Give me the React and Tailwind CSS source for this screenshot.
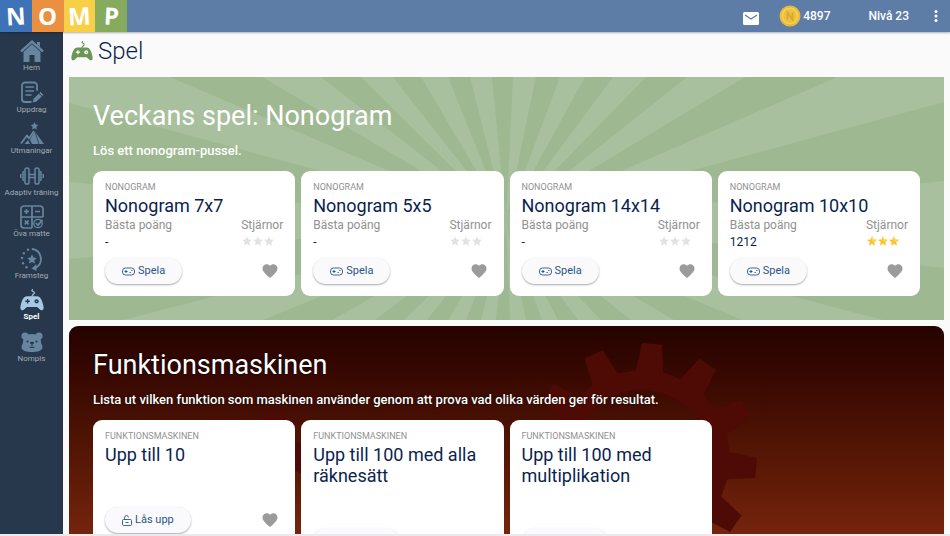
import React from 'react';

const logo = [
  { letter: 'N', color: 'bg-[#3f73b7]', tilt: '-rotate-3' },
  { letter: 'O', color: 'bg-[#ea9040]', tilt: 'rotate-0' },
  { letter: 'M', color: 'bg-[#f8d048]', tilt: '-rotate-3' },
  { letter: 'P', color: 'bg-[#86aa5e]', tilt: 'rotate-3' },
];

const HomeIcon = () => (
  <svg className="w-6 h-6" viewBox="0 0 24 24" fill="currentColor">
    <path d="M12 4 3.500 12v11H9.500v-7h5v7h6V12z" />
    <path d="M1 12.500 12 2.500l11 10" fill="none" stroke="#27384c" strokeWidth="4" />
    <path d="M1 12.500 12 2.500l11 10" fill="none" stroke="currentColor" strokeWidth="2.400" />
    <path d="M17 3h3v5l-3-2.500z" />
  </svg>
);

const TaskIcon = () => (
  <svg className="w-6 h-6" viewBox="0 0 24 24" fill="none" stroke="currentColor" strokeWidth="1.800" strokeLinecap="round" strokeLinejoin="round">
    <path d="M17 9V4.500a3 3 0 0 0-3-3H5a3 3 0 0 0-3 3V18a3 3 0 0 0 3 3h6" />
    <path d="M6 6h7.500M6 10h7.500M6 14h5" strokeWidth="1.500" />
    <path d="m12 22 1.200-4.500 7.300-7 3.500 3.300-7.500 7.200z" fill="currentColor" stroke="#27384c" strokeWidth="1" />
    <path d="m18.500 12 4 3.800" stroke="#27384c" strokeWidth="1" />
  </svg>
);

const MountainIcon = () => (
  <svg className="w-6 h-6" viewBox="0 0 24 24" fill="currentColor">
    <path d="m14.500 0 1.200 2.500 2.600.4-1.900 1.900.4 2.700-2.300-1.200-2.300 1.200.4-2.700-1.900-1.900 2.600-.4z" />
    <path d="M14.500 9 24 22H12l-2-4z" />
    <path d="m14.500 9 2.500 7 2 6" fill="none" stroke="#27384c" strokeWidth=".8" />
    <path d="m1 21.500 6-8 2 3L14 9" fill="none" stroke="currentColor" strokeWidth="1.800" strokeLinejoin="round" />
    <path d="m4.500 22 3.500-4 2 4z" />
  </svg>
);

const DumbbellIcon = () => (
  <svg className="w-6 h-6" viewBox="0 0 24 24" fill="none" stroke="currentColor" strokeWidth="1.500">
    <path d="M4.500 16.500H4a1 1 0 0 1-1-1v-7a1 1 0 0 1 1-1h.5M19.500 16.500h.5a1 1 0 0 0 1-1v-7a1 1 0 0 0-1-1h-.5" />
    <rect x="5" y="4" width="4" height="16" rx="1.800" />
    <rect x="15" y="4" width="4" height="16" rx="1.800" />
    <path d="M9 10.500h6M9 13.500h6M.8 10v4M23.200 10v4" />
  </svg>
);

const MathIcon = () => (
  <svg className="w-6 h-6" viewBox="0 0 24 24" fill="none" stroke="currentColor" strokeWidth="1.700">
    <path d="M23 12V4a3 3 0 0 0-3-3H4a3 3 0 0 0-3 3v16a3 3 0 0 0 3 3h8M12 1v22M1 12h22" />
    <path d="M6.500 4v5M4 6.500h5M15 6.500h5M4.800 15.500l3.800 3.800M8.600 15.500l-3.800 3.800" />
    <circle cx="18" cy="18.500" r="4.200" strokeWidth="1.300" />
    <path d="m16 18 2 2.200 4.500-5.500" />
  </svg>
);

const ProgressIcon = () => (
  <svg className="w-6 h-6" viewBox="0 0 24 24" fill="currentColor">
    <path d="M12.500 2A10.200 10.200 0 0 1 15.500 21" fill="none" stroke="currentColor" strokeWidth="1.800" strokeLinecap="round" />
    <path d="m11.500 21.500 5-4.500v7z" />
    <path d="m12 7.500 1.500 3 3.300.5-2.400 2.300.6 3.200-3-1.500-3 1.500.6-3.200L7.200 11l3.300-.5z" />
    <circle cx="8" cy="2.800" r="1.200" />
    <circle cx="3.800" cy="6.200" r="1.200" />
    <circle cx="2" cy="11" r="1.200" />
    <circle cx="3" cy="16.200" r="1.200" />
    <circle cx="6.500" cy="20.300" r="1.200" />
  </svg>
);

const GameIcon = ({ className, holes }) => (
  <svg className={className} viewBox="0 0 26 24" fill="currentColor">
    <path d="M13 8C13.500 5.500 16 6 15.500 4S11.500 3 13.500.8" fill="none" stroke="currentColor" strokeWidth="1.300" strokeLinecap="round" />
    <path d="M7.500 8h11C22 8 24 12 25.500 19c.6 3.500-1.500 5-3.500 3.500L18.500 19.500h-11L4 22.500C2 24 0 22.500.5 19 2 12 4 8 7.500 8z" />
    <path d="M8.200 11v4.800M5.800 13.400h4.800" stroke={holes} strokeWidth="1.500" />
    <circle cx="18" cy="13.400" r="2.300" fill={holes} />
    <circle cx="18" cy="13.400" r=".7" />
  </svg>
);

const BearIcon = () => (
  <svg className="w-6 h-6" viewBox="0 0 24 24" fill="currentColor">
    <circle cx="5" cy="6" r="3.600" />
    <circle cx="19" cy="6" r="3.600" />
    <path d="M12 4c6 0 9 3.500 9 8 0 2 1.500 3 1.500 5 0 4-5 5-10.500 5S1.500 21 1.500 17c0-2 1.500-3 1.500-5 0-4.500 3-8 9-8z" />
    <g fill="#27384c">
      <circle cx="7.500" cy="11.500" r="1.100" />
      <circle cx="16.500" cy="11.500" r="1.100" />
      <ellipse cx="12" cy="13" rx="2" ry="1.300" />
    </g>
    <path d="M12 14v2.500M9.500 17q2.500 1.500 5 0" fill="none" stroke="#27384c" />
  </svg>
);

const menu = [
  { label: 'Hem', icon: <HomeIcon /> },
  { label: 'Uppdrag', icon: <TaskIcon /> },
  { label: 'Utmaningar', icon: <MountainIcon /> },
  { label: 'Adaptiv träning', icon: <DumbbellIcon /> },
  { label: 'Öva matte', icon: <MathIcon /> },
  { label: 'Framsteg', icon: <ProgressIcon /> },
  { label: 'Spel', icon: <GameIcon className="w-6 h-6" holes="#27384c" />, active: true },
  { label: 'Nompis', icon: <BearIcon /> },
];

const weekly = [
  { title: 'Nonogram 7x7', score: '-', stars: 0 },
  { title: 'Nonogram 5x5', score: '-', stars: 0 },
  { title: 'Nonogram 14x14', score: '-', stars: 0 },
  { title: 'Nonogram 10x10', score: '1212', stars: 3 },
];

const machine = ['Upp till 10', 'Upp till 100 med alla räknesätt', 'Upp till 100 med multiplikation'];

// light rays, each one a wedge out from the middle of the banner
const rays = [
  '0,0 101,0 437,144 0,26',
  '193,0 252,0 437,144',
  '292,0 324,0 437,144',
  '352,0 379,0 437,144',
  '401,0 423,0 437,144',
  '444,0 467,0 437,144',
  '491,0 516,0 437,144',
  '544,0 577,0 437,144',
  '618,0 676,0 437,144',
  '768,0 875,0 875,25 437,144',
  '875,104 875,191 437,144',
  '814,243 673,243 437,144',
  '605,243 562,243 437,144',
  '532,243 509,243 437,144',
  '489,243 473,243 437,144',
  '457,243 441,243 437,144',
  '427,243 412,243 437,144',
  '397,243 379,243 437,144',
  '358,243 335,243 437,144',
  '306,243 263,243 437,144',
  '194,243 54,243 437,144',
  '0,182 0,105 437,144',
];

// 12 teeth, and a round hole in the middle
const gearPath = (cx, cy, outer, base, hole) => {
  const points = [];
  for (let i = 0; i < 12; i++) {
    const mid = i * 30 + 5;
    [[-9, base], [-5, outer], [5, outer], [9, base]].forEach(([turn, r]) => {
      const a = ((mid + turn) * Math.PI) / 180;
      points.push(`${(cx + r * Math.cos(a)).toFixed(1)} ${(cy + r * Math.sin(a)).toFixed(1)}`);
    });
  }
  return `M${points.join('L')}ZM${cx - hole} ${cy}a${hole} ${hole} 0 1 0 ${hole * 2} 0a${hole} ${hole} 0 1 0 ${-hole * 2} 0Z`;
};

const Star = ({ filled }) => (
  <svg className="w-[10px] h-[10px]" viewBox="0 0 24 24">
    <path d="m12 .5 3.300 8 8.500.6-6.500 5.600 2 8.500L12 18.500l-7.300 4.700 2-8.500L.2 9.100l8.500-.6z" fill={filled ? '#fbc02c' : '#e2e2e2'} />
    {filled && <path d="m12 .5 3.300 8 8.500.6L12 14z" fill="#ffdc50" />}
  </svg>
);

const Heart = () => (
  <button className="mr-1 text-[#9b9b9b]" aria-label="Favorit">
    <svg className="w-[18px] h-[18px]" viewBox="0 0 24 24" fill="currentColor">
      <path d="m12 21.350-1.450-1.320C5.400 15.360 2 12.280 2 8.500 2 5.420 4.420 3 7.500 3c1.740 0 3.410.81 4.500 2.090C13.090 3.810 14.760 3 16.500 3 19.580 3 22 5.420 22 8.500c0 3.780-3.400 6.860-8.550 11.540z" />
    </svg>
  </button>
);

const PadIcon = () => (
  <svg className="w-[13px] h-[9px]" viewBox="0 0 26 18" fill="none" stroke="currentColor" strokeWidth="1.800">
    <rect x="1" y="2" width="24" height="14" rx="6" />
    <path d="M8 6v6M5 9h6" strokeWidth="2" />
    <path d="M15 11h2.500M18.500 7H21" strokeWidth="2" />
  </svg>
);

const LockIcon = () => (
  <svg className="w-[10px] h-[11px]" viewBox="0 0 20 22" fill="none" stroke="currentColor" strokeWidth="1.800">
    <rect x="1" y="9" width="18" height="12" rx="2" />
    <path d="M5 9V5.500a4 4 0 0 1 8-.5M7 15h6" />
  </svg>
);

const Card = ({ category, title, action, icon, children }) => (
  <div className="bg-white rounded-[9px] px-3 pt-[10px] pb-3">
    <div className="text-[9px] leading-3 text-[#919191] uppercase">{category}</div>
    <h3 className="text-lg leading-[21px] mt-[2px] text-[#0b1f4f]">{title}</h3>
    <div className="h-8 mt-px">{children}</div>
    <div className="flex items-center justify-between mt-[9px]">
      <button className="flex items-center gap-[3px] h-[26px] px-[17px] rounded-full bg-[#fafafd] text-[#285588] text-[11px] shadow-[0_1px_2px_rgba(0,0,0,0.35)]">
        {icon}
        <span>{action}</span>
      </button>
      <Heart />
    </div>
  </div>
);

const App = () => {
  return (
    <div className="h-screen flex flex-col overflow-hidden bg-[#fafafa] font-[Roboto,sans-serif] border-b-2 border-[#e9e9ee]">
      <header className="h-8 shrink-0 flex items-center justify-between bg-[#5e7da6] text-white shadow-[0_1px_2px_rgba(0,0,0,0.3)] z-10">
        <a href="#" className="h-8 w-[127px] grid grid-cols-4" aria-label="NOMP">
          {logo.map(({ letter, color, tilt }) => (
            <span key={letter} className={`${color} flex items-center justify-center`}>
              <span className={`${tilt} text-2xl leading-none font-bold font-['Open_Sans',sans-serif]`}>{letter}</span>
            </span>
          ))}
        </a>
        <div className="flex items-center text-xs">
          <button aria-label="Meddelanden" className="mt-1 mr-5">
            <svg className="w-4 h-[13px]" viewBox="0 0 16 13">
              <rect width="16" height="13" rx="1.500" fill="#fff" />
              <path d="m2 3 6 4 6-4" fill="none" stroke="#5e7da6" strokeWidth="1.300" />
            </svg>
          </button>
          <svg className="w-[22px] h-[22px] mr-[2px]" viewBox="0 0 22 22">
            <circle cx="11" cy="11" r="10.500" fill="#e9b93a" />
            <circle cx="11" cy="11" r="8.500" fill="#f5d35a" />
            <circle cx="11" cy="11" r="7" fill="#edc140" />
            <path d="M8.500 14.500v-7l5 7v-7" fill="none" stroke="#d9a92c" strokeWidth="1.700" />
          </svg>
          <span className="font-medium">4897</span>
          <span className="ml-[38px] font-medium">Nivå 23</span>
          <button aria-label="Meny" className="ml-[25px] mr-3">
            <svg className="w-1 h-3" viewBox="0 0 4 12" fill="#fff">
              <circle cx="2" cy="1.500" r="1.500" />
              <circle cx="2" cy="6" r="1.500" />
              <circle cx="2" cy="10.500" r="1.500" />
            </svg>
          </button>
        </div>
      </header>

      <div className="flex flex-1 min-h-0">
        <nav className="w-[63px] shrink-0 bg-[#27384c] pt-[7px]">
          <div className="h-[332px] grid grid-rows-8">
            {menu.map(({ label, icon, active }) => (
              <a
                key={label}
                href="#"
                className={`flex flex-col items-center ${active ? 'text-[#a5c9e5]' : 'text-[#67859f]'}`}
              >
                {icon}
                <span className={`text-[8px] leading-[10px] whitespace-nowrap ${active ? 'text-white font-bold' : 'text-[#a3abb4]'}`}>{label}</span>
              </a>
            ))}
          </div>
        </nav>

        <main className="flex-1 min-w-0 px-[6px] overflow-hidden">
          <div className="h-[45px] flex items-center gap-[5px] pb-[7px] pl-[2px]">
            <span className="text-[#6b9656]">
              <GameIcon className="w-[22px] h-[22px]" holes="#ffffff" />
            </span>
            <h1 className="text-2xl font-light text-[#0b1f4f]">Spel</h1>
          </div>

          {/* Veckans spel */}
          <section className="relative bg-[#9eb891] px-6 pt-[23px] pb-6 text-white">
            <svg className="absolute inset-0 w-full h-full" viewBox="0 0 875 243" preserveAspectRatio="none" fill="#a8c09d">
              {rays.map((points) => (
                <polygon key={points} points={points} />
              ))}
            </svg>
            <div className="relative">
              <h2 className="text-[27px] leading-8">Veckans spel: Nonogram</h2>
              <p className="text-[13px] leading-4 mt-[11px] mb-3 font-medium">Lös ett nonogram-pussel.</p>
              <div className="grid grid-cols-4 gap-[6px] items-start">
                {weekly.map(({ title, score, stars }) => (
                  <Card key={title} category="Nonogram" title={title} action="Spela" icon={<PadIcon />}>
                    <div className="flex justify-between text-xs leading-4">
                      <div>
                        <div className="text-[#919191]">Bästa poäng</div>
                        <div className="text-[#0b1f4f] mt-px">{score}</div>
                      </div>
                      <div>
                        <div className="text-[#919191]">Stjärnor</div>
                        <div className="flex gap-px mt-[3px] pl-px">
                          {[1, 2, 3].map((n) => (
                            <Star key={n} filled={n <= stars} />
                          ))}
                        </div>
                      </div>
                    </div>
                  </Card>
                ))}
              </div>
            </div>
          </section>

          {/* Funktionsmaskinen */}
          <section className="relative mt-[6px] rounded-t-[9px] overflow-hidden bg-linear-to-b from-[#260300] to-[#8c2f14] px-6 pt-[23px] pb-6 text-white">
            <svg className="absolute top-0 left-0 w-[875px] h-[260px]" viewBox="0 0 875 260" fill="#4e0b05" fillRule="evenodd">
              <path d={gearPath(573, 132, 115, 88, 68)} />
              <path d={gearPath(196, 196, 112, 86, 60)} />
            </svg>
            <div className="relative">
              <h2 className="text-[27px] leading-8 [text-shadow:0_0_2px_#000]">Funktionsmaskinen</h2>
              <p className="text-[13px] leading-4 mt-[11px] mb-3 font-medium [text-shadow:0_0_2px_#000]">
                Lista ut vilken funktion som maskinen använder genom att prova vad olika värden ger för resultat.
              </p>
              <div className="grid grid-cols-4 gap-[6px] items-start">
                {machine.map((title) => (
                  <Card key={title} category="Funktionsmaskinen" title={title} action="Lås upp" icon={<LockIcon />} />
                ))}
              </div>
            </div>
          </section>
        </main>
      </div>
    </div>
  );
};

export default App;
